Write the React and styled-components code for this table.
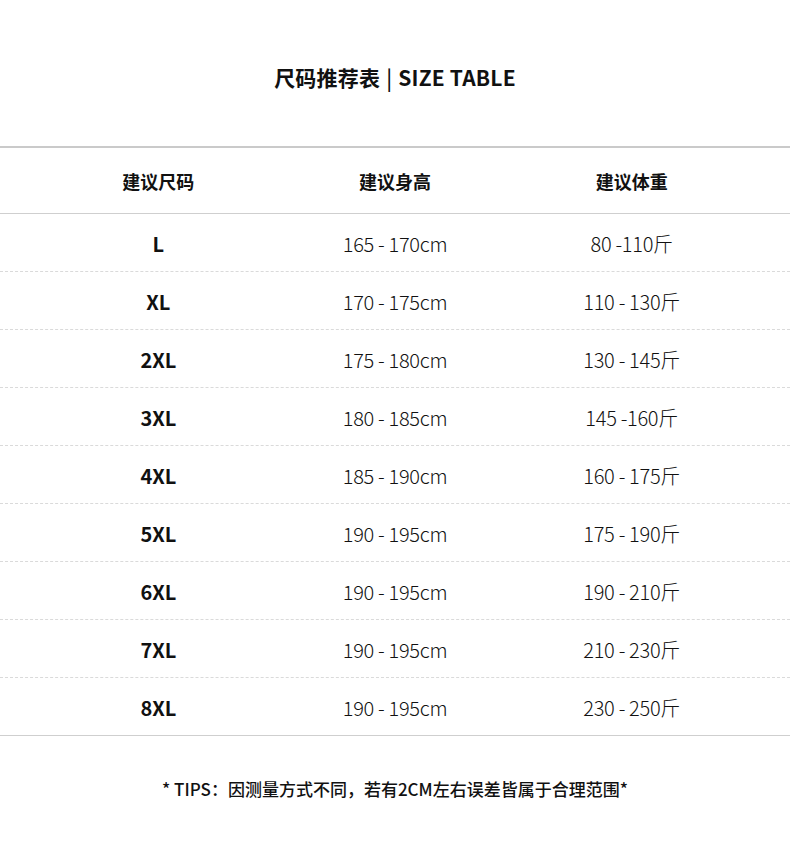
import React from "react";
import styled, { createGlobalStyle } from "styled-components";

const GlobalStyle = createGlobalStyle`
  body {
    margin: 0;
    background: #fff;
    font-family: "Noto Sans CJK SC", "Noto Sans", sans-serif;
    color: #111;
  }
`;

const sizes = [
  ["L", "165 - 170cm", "80 -110斤"],
  ["XL", "170 - 175cm", "110 - 130斤"],
  ["2XL", "175 - 180cm", "130 - 145斤"],
  ["3XL", "180 - 185cm", "145 -160斤"],
  ["4XL", "185 - 190cm", "160 - 175斤"],
  ["5XL", "190 - 195cm", "175 - 190斤"],
  ["6XL", "190 - 195cm", "190 - 210斤"],
  ["7XL", "190 - 195cm", "210 - 230斤"],
  ["8XL", "190 - 195cm", "230 - 250斤"],
];

const Page = styled.div`
  width: 790px;
  height: 857px;
  overflow: hidden;
`;

const Title = styled.h1`
  margin: 0;
  height: 146px;
  padding-top: 62px;
  box-sizing: border-box;
  text-align: center;
  font-size: 21px;
  line-height: 30px;
  font-weight: 700;
  letter-spacing: 0.2px;
`;

const Divider = styled.span`
  font-weight: 500;
  color: #111;
  margin: 0 1px;
`;

const Table = styled.div`
  border-top: 2px solid #cacaca;
  border-bottom: 1px solid #cfcfcf;
`;

const Row = styled.div`
  display: grid;
  grid-template-columns: repeat(3, 1fr);
  padding: 0 40px;
  height: ${(p) => (p.$head ? "65px" : "57px")};
  align-items: center;
  border-bottom: 1px ${(p) => (p.$last ? "none" : p.$head ? "solid" : "dashed")}
    ${(p) => (p.$head ? "#cfcfcf" : "#dadada")};
`;

const Cell = styled.div`
  text-align: center;
  font-size: ${(p) => (p.$head ? "18px" : "20px")};
  font-weight: ${(p) => (p.$bold ? 700 : 300)};
  letter-spacing: ${(p) => (p.$bold ? "0" : "-0.3px")};
  padding-top: ${(p) => (p.$head ? "0" : "2px")};
  color: #111;
`;

const Tips = styled.p`
  margin: 41px 0 0;
  text-align: center;
  font-size: 17px;
  font-weight: 500;
  line-height: 24px;
`;

export default function App() {
  return (
    <Page>
      <GlobalStyle />
      <Title>
        尺码推荐表 <Divider>|</Divider> SIZE TABLE
      </Title>
      <Table>
        <Row $head>
          <Cell $head $bold>建议尺码</Cell>
          <Cell $head $bold>建议身高</Cell>
          <Cell $head $bold>建议体重</Cell>
        </Row>
        {sizes.map(([size, height, weight], i) => (
          <Row key={size} $last={i === sizes.length - 1}>
            <Cell $bold>{size}</Cell>
            <Cell>{height}</Cell>
            <Cell>{weight}</Cell>
          </Row>
        ))}
      </Table>
      <Tips>* TIPS：因测量方式不同，若有2CM左右误差皆属于合理范围*</Tips>
    </Page>
  );
}
